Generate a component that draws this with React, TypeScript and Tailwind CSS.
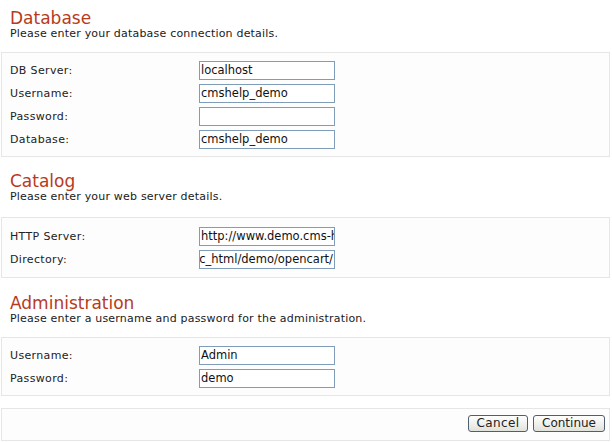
const font = { fontFamily: '"DejaVu Sans", Verdana, sans-serif' };

type Field = {
  label: string;
  value: string;
  alignEnd?: boolean;
};

const Section = ({
  title,
  subtitle,
  fields,
  boxClass,
  headClass,
}: {
  title: string;
  subtitle: string;
  fields: Field[];
  boxClass: string;
  headClass: string;
}) => (
  <div>
    <div className={`pl-[9px] ${headClass}`}>
      <h1 className="text-[17px] leading-[18px] font-normal text-[#b83a1c]">{title}</h1>
      <p className="mt-0 text-[11px] leading-[14px] text-[#1a1a1a] tracking-[0.2px]">{subtitle}</p>
    </div>
    <div className={`border border-[#e6e6e6] bg-[#fdfdfd] pl-[8px] flex flex-col gap-[4px] ${boxClass}`}>
      {fields.map((f) => (
        <div key={f.label} className="flex items-center h-[19px]">
          <div className="w-[189px] text-[11px] text-[#222] tracking-[0.35px] pt-[1px]">{f.label}</div>
          <div
            className={`w-[136px] h-[19px] border border-[#7f9db9] bg-white flex items-center overflow-hidden whitespace-nowrap text-[11.5px] text-[#111] px-[1px] ${
              f.alignEnd ? "justify-end" : "justify-start"
            }`}
          >
            <span className="shrink-0">{f.value}</span>
          </div>
        </div>
      ))}
    </div>
  </div>
);

export default function App() {
  return (
    <div className="w-[612px] h-[442px] bg-white overflow-hidden pl-[1px]" style={font}>
      <div className="w-[609px]">
        <Section
          title="Database"
          subtitle="Please enter your database connection details."
          headClass="pt-[9px] pb-[11px]"
          boxClass="pt-[8px] pb-[7px]"
          fields={[
            { label: "DB Server:", value: "localhost" },
            { label: "Username:", value: "cmshelp_demo" },
            { label: "Password:", value: "" },
            { label: "Database:", value: "cmshelp_demo" },
          ]}
        />
        <Section
          title="Catalog"
          subtitle="Please enter your web server details."
          headClass="pt-[15px] pb-[13px]"
          boxClass="pt-[9px] pb-[8px]"
          fields={[
            { label: "HTTP Server:", value: "http://www.demo.cms-help.net/opencart/" },
            {
              label: "Directory:",
              value: "/home/cmshelp/public_html/demo/opencart/",
              alignEnd: true,
            },
          ]}
        />
        <Section
          title="Administration"
          subtitle="Please enter a username and password for the administration."
          headClass="pt-[16px] pb-[11px]"
          boxClass="pt-[8px] pb-[7px]"
          fields={[
            { label: "Username:", value: "Admin" },
            { label: "Password:", value: "demo" },
          ]}
        />
        <div className="mt-[12px] border border-[#e6e6e6] bg-[#fdfdfd] h-[33px] flex justify-end items-start pt-[6px] pr-[4px] gap-[5px]">
          <button className="w-[60px] h-[17px] rounded-[3px] border border-[#4f5f6f] bg-gradient-to-b from-white to-[#e2e2dc] text-[12px] leading-[15px] text-[#222] tracking-[0.4px]">
            Cancel
          </button>
          <button className="w-[72px] h-[17px] rounded-[3px] border border-[#4f5f6f] bg-gradient-to-b from-white to-[#e2e2dc] text-[12px] leading-[15px] text-[#222]">
            Continue
          </button>
        </div>
      </div>
    </div>
  );
}
